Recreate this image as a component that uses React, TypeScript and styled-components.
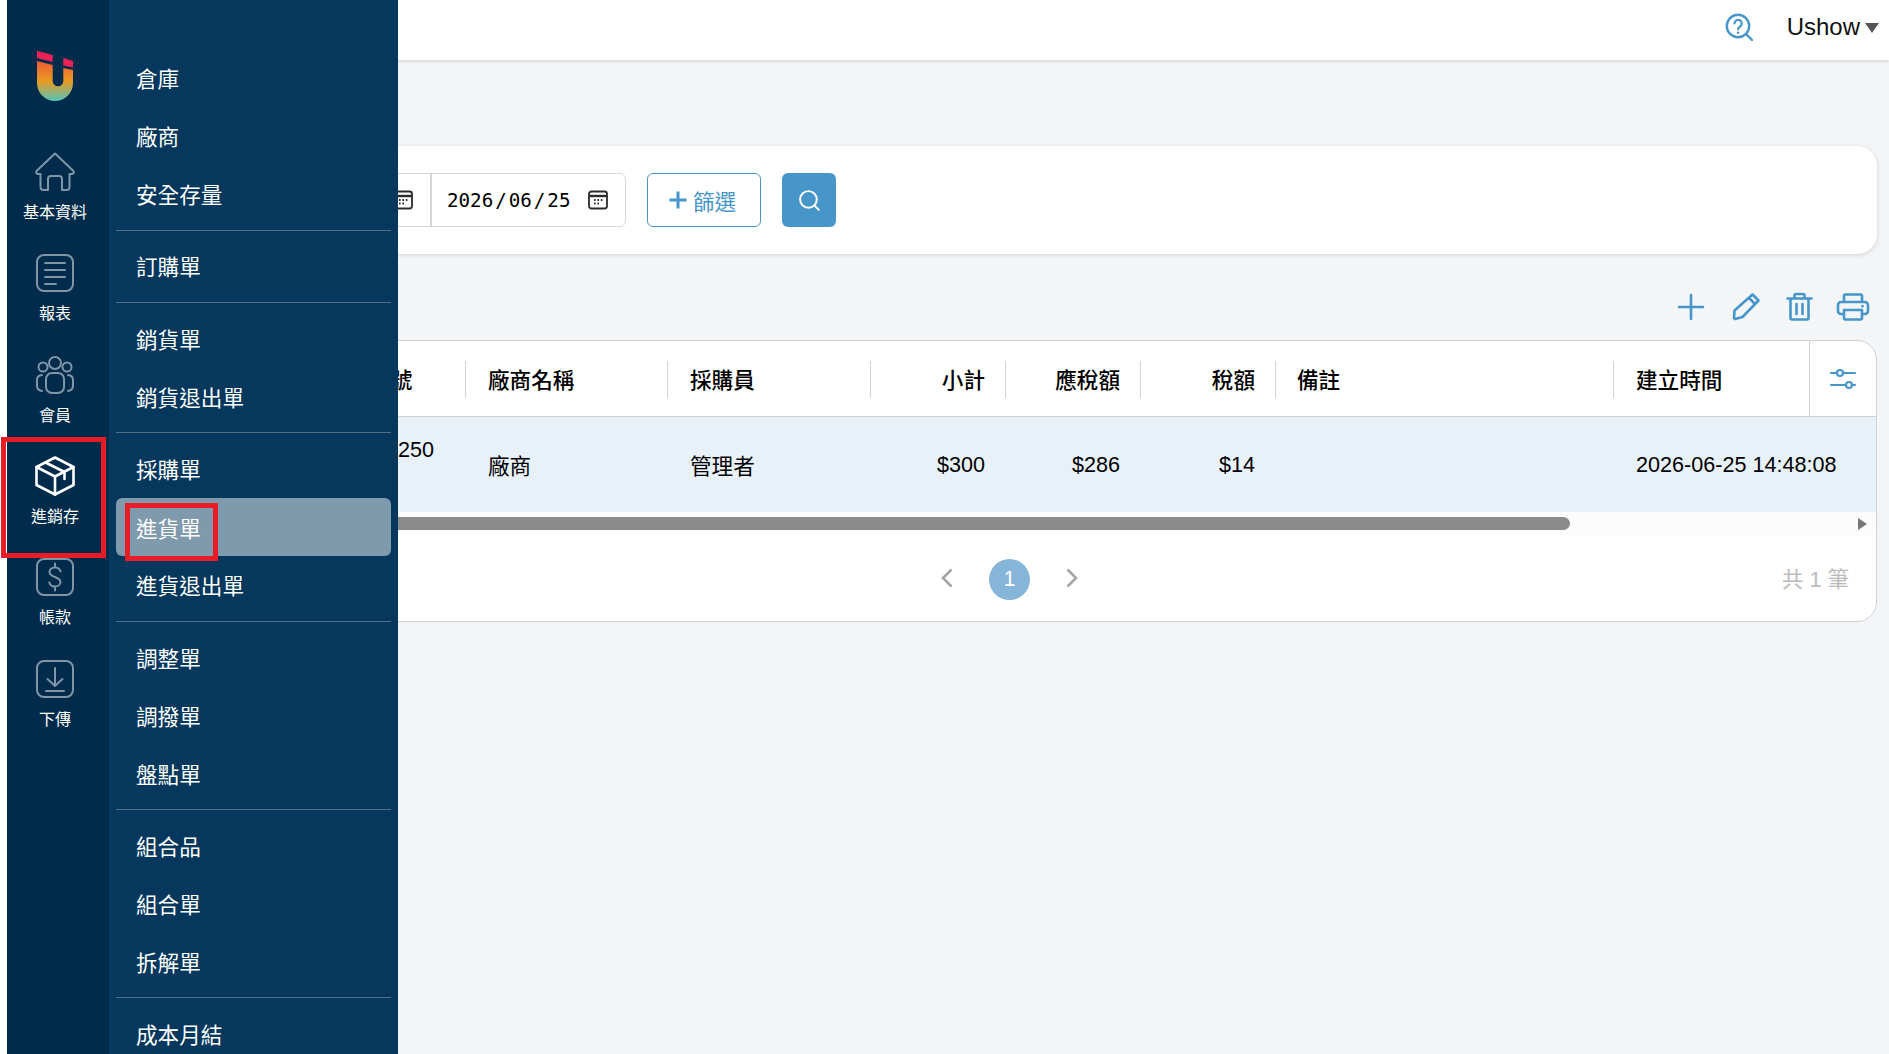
import styled, { createGlobalStyle } from 'styled-components';
import { Search } from 'lucide-react';

const GlobalStyle = createGlobalStyle`
  html, body {
    margin: 0;
    height: 100%;
    overflow: hidden;
    background: #f4f5f7;
  }
  * {
    box-sizing: border-box;
  }
  body {
    font-family: 'Liberation Sans', 'Noto Sans CJK TC', sans-serif;
    font-size: 21.6px;
    color: #000;
  }
`;

const Page = styled.div`
  position: relative;
  height: 1054px;
  overflow: hidden;
`;

const Drawer = styled.aside`
  position: absolute;
  top: 0;
  left: 0;
  bottom: 0;
  display: flex;
  border-left: 7px solid #fff;
`;

const Rail = styled.nav`
  width: 102px;
  background: #002b4b;
  padding: 50px 6px 0 0;
`;

const Logo = styled.svg`
  display: block;
  width: 36px;
  height: 51px;
  margin: 0 auto 30px;
`;

const RailItem = styled.div<{ $active?: boolean }>`
  height: 101.33px;
  padding-top: 21px;
  display: flex;
  flex-direction: column;
  align-items: center;
  gap: 11px;
  color: ${(props) => (props.$active ? '#fff' : '#7f95a8')};

  > span {
    color: #fff;
    font-size: 16px;
    line-height: 20px;
  }
`;

const RailIcon = styled.svg<{ $weight?: number }>`
  display: block;
  width: 40px;
  height: 40px;
  fill: none;
  stroke: currentColor;
  stroke-width: ${(props) => props.$weight ?? 2};
  stroke-linecap: round;
  stroke-linejoin: round;
`;

const SubMenu = styled.div`
  width: 289px;
  background: #05385c;
  padding: 49px 7px 0;
  color: #fff;
`;

const MenuItem = styled.div<{ $selected?: boolean }>`
  height: 58px;
  padding: ${(props) => (props.$selected ? '1px 0 0 20px' : '0 0 1px 20px')};
  display: flex;
  align-items: center;
  border-radius: 6px;
  background: ${(props) => (props.$selected ? '#7f99ad' : 'transparent')};
`;

const MenuDivider = styled.div`
  height: 1px;
  margin: 6.5px 0 6.9px;
  background: #4f6e87;
`;

const Highlight = styled.div`
  position: absolute;
  border: 5px solid #e81c24;
  pointer-events: none;
`;

const RailHighlight = styled(Highlight)`
  left: 1px;
  top: 437px;
  width: 105px;
  height: 121px;
`;

const ItemHighlight = styled(Highlight)`
  left: 125px;
  top: 503px;
  width: 93px;
  height: 58px;
`;

const Main = styled.main`
  display: flex;
  flex-direction: column;
`;

const TopBar = styled.header`
  height: 60px;
  background: #fff;
  box-shadow: 0 1px 4px rgba(0, 0, 0, 0.16);
  display: flex;
  align-items: center;
  justify-content: flex-end;
  padding: 0 10px 6px 0;
`;

const HelpIcon = styled.svg`
  width: 28px;
  height: 28px;
  margin-right: 34px;
  fill: none;
  stroke: #4796c9;
  stroke-width: 2.4;
  stroke-linecap: round;
`;

const UserName = styled.div`
  font-size: 24px;
  color: #111;
  display: flex;
  align-items: center;
  gap: 5px;

  &::after {
    content: '';
    border-left: 7px solid transparent;
    border-right: 7px solid transparent;
    border-top: 10px solid #555;
    margin-top: 2px;
  }
`;

const Content = styled.div`
  padding: 86px 12px 0 142px;
`;

const FilterCard = styled.section`
  height: 108px;
  background: #fff;
  border-radius: 20px;
  box-shadow: 0 1px 5px rgba(0, 0, 0, 0.14);
  padding-left: 92px;
  display: flex;
  align-items: center;
  gap: 21px;
`;

const DateRange = styled.div`
  display: flex;
  height: 54px;
  border: 1px solid #d6d6d6;
  border-radius: 6px;
`;

const DateField = styled.div`
  width: 195px;
  padding: 0 17px 0 15px;
  display: flex;
  align-items: center;
  justify-content: space-between;
  font-family: 'DejaVu Sans Mono', monospace;
  font-size: 19.2px;

  & + & {
    border-left: 2px solid #d6d6d6;
  }
`;

const DateSlash = styled.span`
  display: inline-block;
  width: 15.5px;
  text-align: center;
`;

const CalendarIcon = styled.svg`
  width: 20px;
  height: 20px;
  fill: none;
  stroke: #2b2b2b;
  stroke-width: 1.8;
`;

const FilterButton = styled.button`
  width: 114px;
  height: 54px;
  padding: 0 0 0 20px;
  background: #fff;
  border: 1px solid #4796c9;
  border-radius: 6px;
  color: #4796c9;
  font: inherit;
  display: flex;
  align-items: center;
  justify-content: flex-start;
  gap: 5px;

  > svg {
    width: 20px;
    height: 20px;
    fill: none;
    stroke: currentColor;
    stroke-width: 3;
  }
`;

const SearchButton = styled.button`
  width: 54px;
  height: 54px;
  padding: 0;
  background: #4796c9;
  border: 0;
  border-radius: 6px;
  color: #fff;
  display: flex;
  align-items: center;
  justify-content: center;
`;

const Toolbar = styled.div`
  height: 86px;
  padding-bottom: 18px;
  margin-right: -3px;
  display: flex;
  align-items: flex-end;
  justify-content: flex-end;
`;

const ToolIcon = styled.svg`
  display: block;
  width: 54px;
  height: 30px;
  fill: none;
  stroke: #4796c9;
  stroke-width: 2.6;
  stroke-linecap: round;
  stroke-linejoin: round;
`;

const TableCard = styled.section`
  height: 282px;
  background: #fff;
  border: 1px solid #d0d3d6;
  border-radius: 20px;
  overflow: hidden;
`;

const columns = '161px 162px 202px 203px 135px 135px 135px 338px 195px 1fr';

const HeaderRow = styled.div`
  display: grid;
  grid-template-columns: ${columns};
  height: 76px;
  border-bottom: 1px solid #d0d3d6;
  font-weight: 500;
`;

const BodyRow = styled.div`
  display: grid;
  grid-template-columns: ${columns};
  height: 95px;
  background: #e9f1f8;
`;

const HeaderCell = styled.div<{ $right?: boolean; $pad?: number; $plain?: boolean }>`
  position: relative;
  display: flex;
  align-items: center;
  justify-content: ${(props) => (props.$right ? 'flex-end' : 'flex-start')};
  padding: 0 ${(props) => (props.$right ? props.$pad ?? 21 : 0)}px 0 ${(props) => (props.$right ? 0 : props.$pad ?? 22)}px;
  white-space: nowrap;

  &::after {
    content: '';
    display: ${(props) => (props.$plain ? 'none' : 'block')};
    position: absolute;
    right: 0;
    top: 20px;
    height: 37px;
    width: 1px;
    background: #d3d3d3;
  }
`;

const SettingsCell = styled.div`
  border-left: 1px solid #d0d3d6;
  display: flex;
  align-items: center;
  justify-content: center;
`;

const SettingsIcon = styled.svg`
  width: 28px;
  height: 24px;
  fill: #fff;
  stroke: #4796c9;
  stroke-width: 2.2;
  stroke-linecap: round;
`;

const BodyCell = styled.div<{ $right?: boolean; $pad?: number; $shift?: number }>`
  display: flex;
  align-items: center;
  justify-content: ${(props) => (props.$right ? 'flex-end' : 'flex-start')};
  padding: ${(props) => props.$shift ?? 0}px ${(props) => (props.$right ? props.$pad ?? 21 : 0)}px 0 ${(props) => (props.$right ? 0 : props.$pad ?? 22)}px;
  line-height: 30px;
  white-space: nowrap;
`;

const ScrollTrack = styled.div`
  height: 23px;
  background: #fcfcfc;
  display: flex;
  align-items: center;
  padding: 0 9px 0 24px;
  justify-content: space-between;
`;

const ScrollThumb = styled.div`
  width: 1403px;
  height: 13px;
  background: #8b8b8b;
  border-radius: 7px;
`;

const ScrollArrow = styled.div`
  border-top: 6px solid transparent;
  border-bottom: 6px solid transparent;
  border-left: 9px solid #777;
`;

const TableFooter = styled.div`
  height: 86px;
  display: grid;
  grid-template-columns: 1fr auto 1fr;
  align-items: center;
`;

const Pager = styled.div`
  grid-column: 2;
  display: flex;
  align-items: center;
  gap: 36px;
`;

const PagerArrow = styled.svg`
  width: 12px;
  height: 20px;
  fill: none;
  stroke: #a5a5a5;
  stroke-width: 2.6;
`;

const PageBadge = styled.div`
  width: 41px;
  height: 41px;
  margin-top: 2px;
  border-radius: 50%;
  background: #85b5d9;
  color: #fff;
  font-size: 21.6px;
  display: flex;
  align-items: center;
  justify-content: center;
`;

const Total = styled.div`
  justify-self: end;
  margin: 0 27px 2px 0;
  color: #bbb;
  font-size: 21.6px;
`;

const menuGroups = [
  ['倉庫', '廠商', '安全存量'],
  ['訂購單'],
  ['銷貨單', '銷貨退出單'],
  ['採購單', '進貨單', '進貨退出單'],
  ['調整單', '調撥單', '盤點單'],
  ['組合品', '組合單', '拆解單'],
  ['成本月結'],
];

const CalendarGlyph = () => (
  <CalendarIcon viewBox="0 0 20 20">
    <rect x="1" y="1.5" width="18" height="17" rx="2.5" />
    <path d="M1 6h18" strokeWidth="2.4" />
    <path d="M6 10h1.6M9.4 10H11M12.8 10h1.6M6 13.5h1.6M9.4 13.5H11" strokeWidth="1.8" />
  </CalendarIcon>
);

const DateValue = () => (
  <span>
    2026<DateSlash>/</DateSlash>06<DateSlash>/</DateSlash>25
  </span>
);

const App = () => {
  return (
    <Page>
      <GlobalStyle />
      <Main>
        <TopBar>
          <HelpIcon viewBox="0 0 28 28">
            <circle cx="13" cy="13" r="11.2" />
            <path d="M22 22l5 5" />
            <path d="M9.5 10.5a3.6 3.6 0 1 1 5.6 3c-1.3.8-2 1.4-2 2.8" strokeWidth="2.2" />
            <path d="M13.1 19.6v.2" strokeWidth="2.4" />
          </HelpIcon>
          <UserName>Ushow</UserName>
        </TopBar>
        <Content>
          <FilterCard>
            <DateRange>
              <DateField>
                <DateValue />
                <CalendarGlyph />
              </DateField>
              <DateField>
                <DateValue />
                <CalendarGlyph />
              </DateField>
            </DateRange>
            <FilterButton>
              <svg viewBox="0 0 20 20">
                <path d="M10 1.5v17M1.5 10h17" />
              </svg>
              篩選
            </FilterButton>
            <SearchButton>
              <Search size={25} strokeWidth={1.9} />
            </SearchButton>
          </FilterCard>
          <Toolbar>
            <ToolIcon viewBox="0 0 54 30">
              <path d="M27 3v24M15 15h24" />
            </ToolIcon>
            <ToolIcon viewBox="0 0 54 30">
              <path d="M34.500 2.500l6 6L24.500 25l-7.500 2-1-1 .5-7.500zM31 6l6 6" />
            </ToolIcon>
            <ToolIcon viewBox="0 0 54 30">
              <path d="M15.500 6.500h24M18.500 6.500V26a1.500 1.500 0 0 0 1.500 1.500h15a1.500 1.500 0 0 0 1.500-1.500V6.500M22.500 6.500V3.500A1.500 1.500 0 0 1 24 2h7a1.500 1.500 0 0 1 1.500 1.500v3M24.500 12v10M30.500 12v10" />
            </ToolIcon>
            <ToolIcon viewBox="0 0 54 30">
              <path d="M18 10V4a1.500 1.500 0 0 1 1.500-1.500h15A1.500 1.500 0 0 1 36 4v6M18 22h-3a3 3 0 0 1-3-3v-6a3 3 0 0 1 3-3h24a3 3 0 0 1 3 3v6a3 3 0 0 1-3 3h-3M18 18h18v8a1.500 1.500 0 0 1-1.500 1.500h-15A1.500 1.500 0 0 1 18 26z" />
              <path d="M36.500 14v.2" />
            </ToolIcon>
          </Toolbar>
          <TableCard>
            <HeaderRow>
              <HeaderCell $plain />
              <HeaderCell>進貨單號</HeaderCell>
              <HeaderCell>廠商名稱</HeaderCell>
              <HeaderCell>採購員</HeaderCell>
              <HeaderCell $right>小計</HeaderCell>
              <HeaderCell $right>應稅額</HeaderCell>
              <HeaderCell $right>稅額</HeaderCell>
              <HeaderCell $pad={21}>備註</HeaderCell>
              <HeaderCell $plain>建立時間</HeaderCell>
              <SettingsCell>
                <SettingsIcon viewBox="0 0 28 24">
                  <path d="M2 6h24M2 18h24" />
                  <circle cx="11" cy="6" r="3" />
                  <circle cx="20" cy="18" r="3" />
                </SettingsIcon>
              </SettingsCell>
            </HeaderRow>
            <BodyRow>
              <BodyCell />
              <BodyCell $shift={1}>
                <div>
                  202606250
                  <br />
                  001
                </div>
              </BodyCell>
              <BodyCell $shift={4}>廠商</BodyCell>
              <BodyCell $shift={4}>管理者</BodyCell>
              <BodyCell $right>$300</BodyCell>
              <BodyCell $right>$286</BodyCell>
              <BodyCell $right>$14</BodyCell>
              <BodyCell $pad={21} />
              <BodyCell>2026-06-25 14:48:08</BodyCell>
              <BodyCell />
            </BodyRow>
            <ScrollTrack>
              <ScrollThumb />
              <ScrollArrow />
            </ScrollTrack>
            <TableFooter>
              <Pager>
                <PagerArrow viewBox="0 0 12 20">
                  <path d="M10.500 1.500L2 10l8.500 8.500" />
                </PagerArrow>
                <PageBadge>1</PageBadge>
                <PagerArrow viewBox="0 0 12 20">
                  <path d="M1.500 1.500L10 10l-8.500 8.500" />
                </PagerArrow>
              </Pager>
              <Total>共 1 筆</Total>
            </TableFooter>
          </TableCard>
        </Content>
      </Main>
      <Drawer>
        <Rail>
          <Logo viewBox="0 0 36 51">
            <defs>
              <linearGradient id="logoFill" x1="0" y1="0" x2="0" y2="1">
                <stop offset="0" stopColor="#ef5a35" />
                <stop offset="0.5" stopColor="#e89a22" />
                <stop offset="1" stopColor="#55c4b8" />
              </linearGradient>
            </defs>
            <polygon points="0,0.700 15.700,5 15.700,12 0,8" fill="#ee2257" />
            <polygon points="26.300,8 36,11 36,17.500 26.300,15.500" fill="#ee2257" />
            <path d="M0 11L15.700 15V31a5.300 5.300 0 0 0 10.600 0V18L36 20V33a18 18 0 0 1-36 0Z" fill="url(#logoFill)" />
          </Logo>
          <RailItem>
            <RailIcon viewBox="0 0 40 40">
              <path d="M20 1.500L1.500 19q-1 2.500 1.500 3H5.500V35q0 3 3 3H13V27q0-3 3-3h8q3 0 3 3V38h4.500q3 0 3-3V22H37q2.500-.5 1.500-3Z" />
            </RailIcon>
            <span>基本資料</span>
          </RailItem>
          <RailItem>
            <RailIcon viewBox="0 0 40 40">
              <rect x="2" y="2" width="36" height="36" rx="7" />
              <path d="M10 10h20M10 17h20M10 24h20M10 31h11" />
            </RailIcon>
            <span>報表</span>
          </RailItem>
          <RailItem>
            <RailIcon viewBox="0 0 40 40">
              <circle cx="20" cy="8" r="6" />
              <circle cx="8" cy="12" r="4.500" />
              <circle cx="32" cy="12" r="4.500" />
              <rect x="11" y="18" width="18" height="20" rx="6" />
              <path d="M7 20q-5 .5-5 5v6q0 4 5 5M33 20q5 .5 5 5v6q0 4-5 5" />
            </RailIcon>
            <span>會員</span>
          </RailItem>
          <RailItem $active>
            <RailIcon viewBox="0 0 40 40" $weight={2.6}>
              <path d="M20 1.500L38.500 11V29L20 38.500 1.500 29V11Z" />
              <path d="M1.500 11L20 20.500 38.500 11M20 20.500V38.500M10.500 6.500L29.500 16V23" />
            </RailIcon>
            <span>進銷存</span>
          </RailItem>
          <RailItem>
            <RailIcon viewBox="0 0 40 40">
              <rect x="2" y="2" width="36" height="36" rx="7" />
              <path d="M25.500 14.500a5.500 5.500 0 0 0-5.500-4c-3 0-5.500 1.800-5.500 4.500 0 6 11 4 11 10 0 2.800-2.500 4.500-5.500 4.500a5.800 5.800 0 0 1-5.700-4M20 6.500v4M20 29.500v4" />
            </RailIcon>
            <span>帳款</span>
          </RailItem>
          <RailItem>
            <RailIcon viewBox="0 0 40 40">
              <rect x="2" y="2" width="36" height="36" rx="7" />
              <path d="M20 9v18M12.500 20l7.500 7 7.500-7M11 32h18" />
            </RailIcon>
            <span>下傳</span>
          </RailItem>
        </Rail>
        <SubMenu>
          {menuGroups.map((group, index) => (
            <div key={group[0]}>
              {index > 0 && <MenuDivider />}
              {group.map((item) => (
                <MenuItem key={item} $selected={item === '進貨單'}>
                  {item}
                </MenuItem>
              ))}
            </div>
          ))}
        </SubMenu>
      </Drawer>
      <RailHighlight />
      <ItemHighlight />
    </Page>
  );
};

export default App;
